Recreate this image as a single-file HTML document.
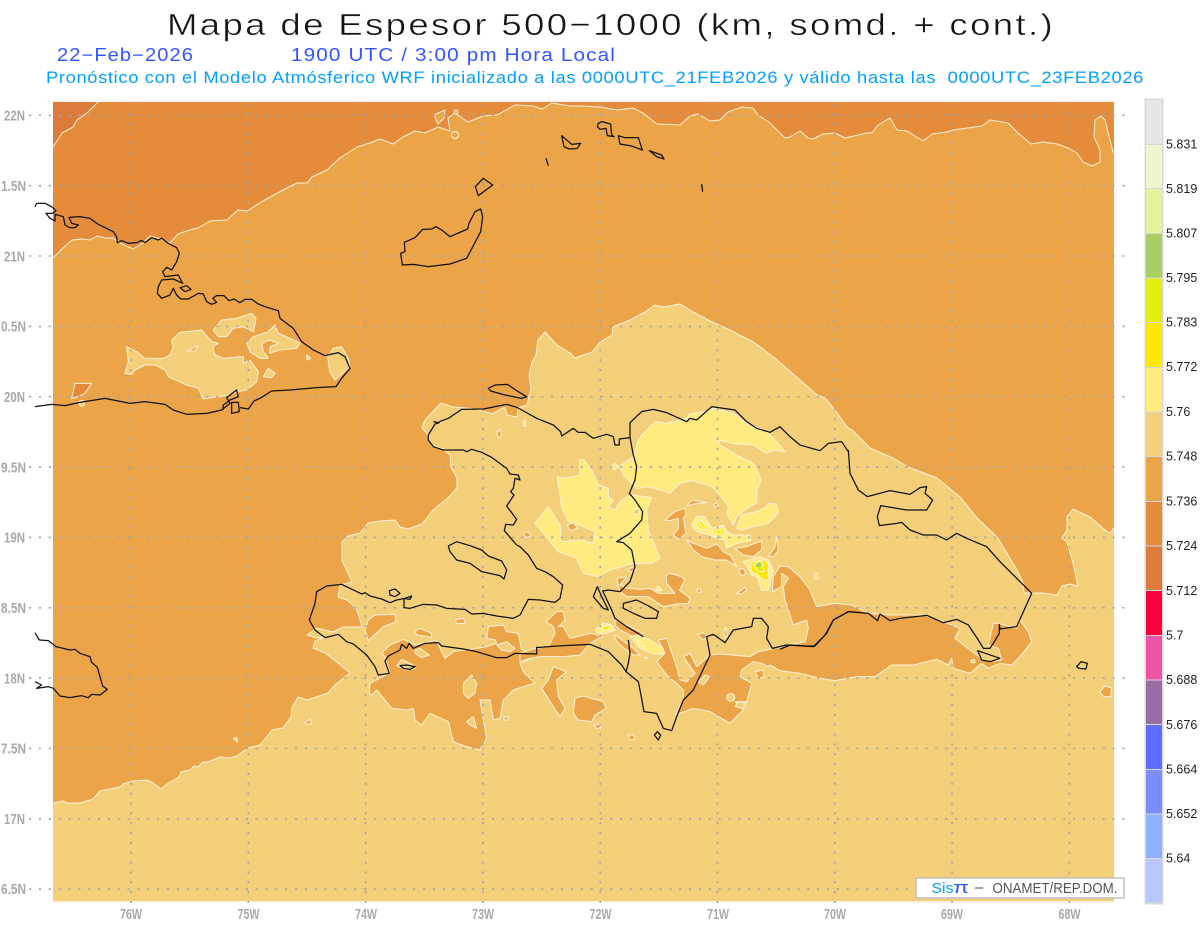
<!DOCTYPE html>
<html><head><meta charset="utf-8"><title>Mapa de Espesor</title>
<style>
html,body{margin:0;padding:0;background:#fff;width:1200px;height:927px;overflow:hidden}
svg{display:block}
polygon,polyline,circle{vector-effect:non-scaling-stroke}
.m polygon,.m circle{stroke:#fff2d8;stroke-width:1;stroke-linejoin:round}
.o{fill:#EBA447}.d{fill:#E58C3C}.x{fill:#DC7B3C}.t{fill:#F3CF7A}.y{fill:#FFEB80}.f{fill:#FCE800}.g{fill:#E2EE10}.a{fill:#A9CE64}
.c polygon,.c polyline{fill:none;stroke:#111;stroke-width:1.25;stroke-linejoin:round}
.lab{font:bold 14.5px "Liberation Sans",sans-serif;fill:#a9a9a9}
.cb{font:12.5px "Liberation Sans",sans-serif;fill:#222}
text{white-space:pre}
</style></head><body>
<svg width="1200" height="927" viewBox="0 0 1200 927" xmlns="http://www.w3.org/2000/svg">
<defs><clipPath id="p"><rect x="53" y="102" width="1061" height="799"/></clipPath></defs>
<rect width="1200" height="927" fill="#fff"/>
<text x="167" y="35" font-family="Liberation Sans" font-size="31" fill="#151515" stroke="#fff" stroke-width=".45" letter-spacing="2" textLength="888" lengthAdjust="spacingAndGlyphs">Mapa de Espesor 500−1000 (km, somd. + cont.)</text>
<text x="57" y="61" font-family="Liberation Sans" font-size="18" fill="#3355FF" letter-spacing="1" textLength="137" lengthAdjust="spacingAndGlyphs">22−Feb−2026</text>
<text x="291" y="61" font-family="Liberation Sans" font-size="18" fill="#3355FF" letter-spacing="1" textLength="325" lengthAdjust="spacingAndGlyphs">1900 UTC / 3:00 pm Hora Local</text>
<text x="46" y="83" font-family="Liberation Sans" font-size="16.5" fill="#00A0FF" letter-spacing=".6" textLength="1098" lengthAdjust="spacingAndGlyphs">Pronóstico con el Modelo Atmósferico WRF inicializado a las 0000UTC_21FEB2026 y válido hasta las  0000UTC_23FEB2026</text>

<rect x="46" y="100" width="1074" height="2" fill="#fdf6ee"/>
<rect x="53" y="901" width="1061" height="2" fill="#fdf3dc"/>
<g clip-path="url(#p)" class="m">
<rect x="53" y="102" width="1061" height="799" fill="#F3CF7A"/>
<!-- main orange -->
<polygon class="o" points="46,803 53,803 63,801 67,803 80,803 93,799 100,791 110,789 120,787 123,784 133,781 147,780 153,783 161,789 167,784 179,777 181,772 190,770 194,766 198,767 203,762 208,762 220,757 230,758 237,756 248,748 260,745 272,730 283,728 291,717 292,708 298,697 307,700 313,698 322,695 328,693 335,685 350,673 338,663 325,653 313,648 315,641 325,637 317,638 307,635 317,628 333,632 343,627 362,627 358,613 355,607 347,600 338,597 340,585 352,582 342,560 342,542 348,536 360,533 368,523 380,521 395,520 400,527 408,529 422,524 433,510 448,498 457,488 457,478 451,467 450,455 443,449 432,445 428,435 422,428 425,420 441,403 453,407 467,408 480,410 492,414 505,407 507,415 517,417 518,408 527,405 531,388 529,375 532,362 536,355 538,340 545,332 557,345 570,353 575,358 592,352 600,342 612,335 613,327 630,320 645,312 655,305 663,307 680,304 695,313 710,321 730,330 755,343 777,360 800,380 817,395 825,398 835,410 847,427 852,430 870,448 893,458 908,467 937,478 960,497 977,518 997,537 1017,570 1023,583 1024,593 1043,593 1057,595 1062,586 1070,584 1078,586 1073,563 1067,542 1062,538 1067,530 1067,517 1073,509 1090,517 1105,530 1110,533 1114,528 1120,528 1120,95 46,95"/>
<!-- dark orange -->
<polygon class="d" points="46,258 53,258 63,248 72,240 82,239 90,240 97,236 105,238 113,238 120,243 133,249 143,243 150,236 158,238 170,243 178,234 193,229 198,228 210,221 227,220 238,210 247,211 263,201 283,190 297,183 307,183 312,177 327,170 340,158 357,147 370,143 380,139 393,144 403,137 415,131 425,133 438,127 450,131 448,118 455,113 462,118 468,122 483,116 497,115 515,105 533,106 542,109 552,103 570,106 583,106 600,107 617,110 633,108 643,113 657,124 680,125 690,116 698,114 710,121 720,120 728,112 742,107 753,108 758,115 770,123 785,138 790,137 800,131 808,138 813,139 823,134 835,133 845,138 867,133 872,133 878,125 890,118 897,130 907,131 923,141 932,134 947,132 953,130 968,128 982,126 990,120 1008,123 1018,133 1031,144 1043,142 1057,144 1068,148 1077,153 1083,162 1092,166 1100,162 1100,150 1094,137 1095,120 1101,116 1105,120 1113,152 1120,153 1120,95 46,95"/>
<polygon class="x" points="46,150 53,147 62,133 73,127 77,120 88,112 98,102 100,95 46,95"/>
<polygon class="o" points="434,115 445,110 444,118 438,124"/>
<circle class="o" cx="455" cy="135" r="3.5"/>
<circle class="o" cx="456" cy="112" r="2"/>

<!-- Cuba tan -->
<g transform="translate(30,95) scale(.33333)">
<polygon class="t" points="290,755 320,770 345,790 400,790 420,780 430,755 425,735 450,712 515,705 545,740 565,745 548,755 555,780 580,790 640,785 640,805 660,795 685,830 680,860 650,885 620,890 600,900 520,912 505,880 470,870 415,845 405,825 375,810 345,810 315,825 305,838 285,835 295,800"/>
<polygon class="o" points="470,768 505,752 495,768"/>
<polygon class="t" points="550,705 575,675 620,670 665,655 678,670 670,710 640,695 610,700 590,725 565,725"/>
<polygon class="t" points="650,745 670,725 715,710 735,690 745,715 790,735 810,745 800,760 750,765 720,775 720,755 745,745 720,735 695,745 700,770 715,790 690,790 660,770"/>
<polygon class="t" points="700,845 715,820 735,835 725,848"/>
<polygon class="t" points="893,785 910,760 935,755 955,790 960,815 915,855 900,830 895,800"/>
<polygon class="t" points="830,780 842,790 830,795"/>
<polygon class="d" points="125,910 135,865 185,865 165,895 145,905"/>
<circle class="t" cx="155" cy="925" r="9"/>
</g>
<!-- tan small west -->
<g transform="translate(20,560) scale(.33333)">
<polygon class="t" points="640,535 650,532 653,547"/>
</g>

<!-- orange in west-central -->
<g transform="translate(300,400) scale(.33333)">
<polygon class="o" points="208,880 210,850 245,832 270,818 255,770 245,760 270,735 310,718 345,735 380,728 410,720 420,745 435,775 460,755 510,748 560,740 590,730 585,720 560,715 565,680 610,675 620,695 655,700 665,750 690,755 720,745 720,760 695,775 660,790 670,815 705,850 670,860 640,870 610,900 600,955 580,960 570,900 540,900 550,960 560,1015 540,1050 500,1040 460,1025 445,965 390,940 365,975 345,960 340,925 320,930 275,925 230,870 215,885"/>
<polygon class="t" points="490,880 490,850 515,825 530,850 525,880 505,895"/>
<polygon class="t" points="500,965 520,950 530,985 510,975"/>
<polygon class="t" points="590,735 620,725 645,745 630,755 605,750"/>
<polygon class="t" points="345,750 360,745 388,765 365,773 345,760"/>
<polygon class="t" points="290,797 305,778 340,795 345,805 320,810"/>
<polygon class="o" points="205,660 225,645 285,643 288,665 250,680 205,722 195,690"/>
<polygon class="o" points="345,695 360,685 395,700 395,712 350,705"/>
<polygon class="o" points="465,660 490,655 497,670 470,670"/>
<polygon class="o" points="590,95 600,90 605,105 595,115"/>
<polygon class="o" points="15,967 30,958 35,972 20,972"/>
<polygon class="o" points="612,952 625,950 625,960 612,960"/>
<polygon class="t" points="670,65 676,62 676,80 670,78"/>
</g>

<!-- center -->
<g transform="translate(520,400) scale(.33333)">
<polygon class="y" points="405,65 440,70 500,55 510,40 560,35 580,25 640,40 680,70 740,95 770,125 795,155 760,150 740,160 700,135 640,130 595,120 600,135 650,165 700,190 725,240 710,270 710,310 680,325 650,350 640,375 620,340 625,320 600,285 575,260 545,250 515,242 480,250 450,280 420,270 385,260 350,265 310,225 298,200 340,170 355,120 375,95"/>
<polygon class="y" points="112,230 135,235 180,225 178,180 190,178 215,210 235,255 265,265 265,290 280,300 265,320 285,330 300,305 330,285 395,292 380,330 385,390 420,475 395,490 340,490 270,510 235,530 190,520 170,475 115,455 45,370 85,320 120,375 125,425 185,420 220,430 225,395 190,380 145,365 125,320"/>
<polygon class="y" points="650,385 665,345 710,335 740,320 745,310 770,312 775,340 745,370 700,380 665,390"/>
<polygon class="y" points="515,375 530,348 555,350 575,385 610,375 620,395 640,405 690,405 692,422 650,430 620,445 612,420 590,415 570,405 530,395"/>
<polygon class="y" points="272,200 285,190 295,200 285,210"/>
<polygon class="t" points="340,330 355,325 360,340 345,345"/>
<polygon class="o" points="142,375 160,368 173,385 150,392"/>
<polygon class="o" points="10,400 25,395 35,410 15,412"/>
<polygon class="g" points="530,368 540,357 565,380 555,392 540,385"/>
<polygon class="f" points="537,368 543,362 558,380 552,387"/>
<polygon class="g" points="575,395 605,380 615,395 595,412"/>
<polygon class="f" points="585,397 603,387 606,395 595,404"/>
<polygon class="o" points="435,360 465,335 495,325 498,345 490,355 498,400 475,418 460,405 475,385 475,355 450,362"/>
<polygon class="o" points="500,318 515,300 535,303 560,308 530,310"/>
<polygon class="o" points="582,313 590,308 595,318 585,322"/>
<polygon class="o" points="500,420 520,430 560,445 590,432 610,455 630,465 650,500 620,480 585,480 545,470 520,450"/>
<polygon class="o" points="645,445 680,440 725,422 725,450 700,470 670,465"/>
<polygon class="o" points="745,470 765,440 770,410 775,450 760,470"/>
<polygon class="o" points="655,510 670,505 678,520 665,528"/>
<polygon class="o" points="650,580 675,562 680,570 665,582"/>
<polygon class="o" points="290,535 320,530 300,555 320,565 360,568 390,565 415,580 465,580 440,550 438,525 450,520 485,530 495,540 478,570 510,595 505,610 470,612 430,620 385,590 345,590 320,590 300,575"/>
<polygon class="o" points="322,510 335,502 350,510 335,516"/>
<polygon class="o" points="530,570 540,565 545,575 535,578"/>
<polygon class="y" points="405,568 415,558 427,570 415,574"/>
<polygon class="o" points="78,665 110,635 130,635 135,660 115,680 130,680 150,715 190,705 215,700 245,710 210,730 180,765 130,770 60,770 30,775 0,785 0,760 45,745 85,740 105,700 100,680"/>
<polygon class="o" points="65,865 85,840 100,800 140,815 110,840 115,890 135,925 120,950 100,920"/>
<polygon class="o" points="165,895 190,888 250,905 258,925 225,945 215,965 175,960 160,940"/>
<polygon class="o" points="285,705 340,745 360,765 340,765 300,735 285,715"/>
<polygon class="o" points="285,660 310,670 370,700 340,710 300,690 285,675"/>
<polygon class="o" points="532,705 550,698 565,710 550,720"/>
<polygon class="o" points="612,700 617,682 622,705 617,715"/>
<polygon class="o" points="222,975 240,973 243,983 228,985"/>
<polygon class="o" points="325,1005 340,1005 345,1018 330,1020"/>
<polygon class="o" points="372,772 382,772 380,778"/>
<!-- east big orange -->
<polygon class="o" points="757,575 760,530 780,498 805,500 840,530 870,570 890,620 945,610 995,615 1045,640 1110,645 1210,645 1270,665 1320,685 1305,715 1350,750 1390,780 1405,785 1445,780 1435,745 1405,735 1420,670 1435,670 1490,685 1500,660 1525,695 1535,725 1500,770 1475,795 1440,790 1405,805 1385,790 1350,820 1300,805 1295,775 1285,795 1250,778 1180,795 1115,795 1065,830 1010,830 945,842 900,835 840,820 780,812 750,795 745,800 725,790 700,785 665,810 660,830 695,850 680,905 645,905 670,930 630,970 570,935 520,925 465,945 490,900 490,870 470,850 440,825 410,785 435,760 415,720 440,715 470,800 480,840 500,845 525,820 490,770 510,760 530,800 570,765 600,762 690,770 715,755 790,740 855,725 865,685 860,660 820,675 795,600 790,560 805,535 785,520 785,560"/>
<polygon class="t" points="535,845 555,825 570,830 550,855"/>
<circle class="t" cx="632" cy="892" r="12"/>
<polygon class="t" points="645,920 655,905 680,910 670,925"/>
<polygon class="o" points="705,815 730,810 732,830 715,835"/>
<polygon class="y" points="670,485 720,470 745,480 760,510 745,570 725,572 712,530 695,525 682,500"/>
<polygon class="f" points="690,490 730,478 745,490 745,540 730,540 715,525 695,515"/>
<polygon class="g" points="700,495 725,482 733,515 715,515"/>
<polygon class="a" style="stroke:none" points="708,492 720,486 724,500 712,502"/>
<polygon class="y" points="225,690 250,668 275,675 285,690 260,700 235,700"/>
<polygon class="f" points="245,680 265,678 270,688 250,690"/>
<polygon class="y" points="330,710 350,705 390,720 430,745 430,762 400,762 360,745"/>
<polygon class="f" points="345,712 375,740 360,735"/>
<polygon class="t" points="885,522 892,520 894,535 887,537"/>
<polygon class="t" points="10,62 16,60 16,78 10,78"/>
</g>
<g transform="translate(780,430) scale(.33333)">
<polygon class="o" points="960,785 975,768 995,775 992,800 972,800"/>
<polygon class="t" points="102,432 112,430 114,445 105,447"/>
<polygon class="t" points="572,692 582,688 586,697 575,699"/>
</g>
</g>

<!-- grid -->
<g stroke="#a4a6a6" stroke-width="1.6" stroke-dasharray="2.2 7.65" fill="none">
<path d="M29 115.3H1132M29 185.7H1132M29 256H1132M29 326.4H1132M29 396.7H1132M29 467.1H1132M29 537.4H1132M29 607.8H1132M29 678.1H1132M29 748.5H1132M29 818.8H1132M29 889.2H1132"/>
<path d="M131 103V905M248.3 103V905M365.6 103V905M482.9 103V905M600.2 103V905M717.5 103V905M834.8 103V905M952.1 103V905M1069.4 103V905"/>
</g>

<!-- coastlines -->
<g class="c">
<g transform="translate(30,95) scale(.33333)">
<polyline points="15,335 20,325 45,325 65,335 78,347 68,355 48,355 60,370 75,378 75,358 100,365 105,390 120,398 135,398 145,390 125,385 117,367 150,365 180,370 205,388 250,410 260,425 262,443 275,437 295,445 320,443 335,436 345,443 365,428 385,435 395,430 415,445 440,458 448,475 440,500 425,525 410,517 398,530 405,545 445,540 458,565 430,552 395,555 385,575 382,595 395,610 420,600 430,580 440,600 452,612 475,612 505,595 520,597 530,620 545,628 560,622 548,610 560,602 582,602 597,617 612,612 630,623 645,613 665,613 685,627 705,635 745,647 750,670 790,700 815,740 850,765 885,782 925,773 945,785 960,820 935,850 918,875 860,878 780,885 725,888 690,910 672,918 655,942 630,938"/>
<polyline points="15,935 65,928 105,932 150,922 225,910 300,925 345,920 405,928 430,945 470,958 530,955 575,945 600,925 590,908 620,885 625,905 600,915 580,930 578,945"/>
<polygon points="605,922 625,922 628,950 605,955"/>
<polygon points="450,578 470,572 483,583 465,590"/>
</g>
<g transform="translate(370,95) scale(.33333)">
<polygon points="92,475 105,470 103,442 135,428 158,403 185,402 198,395 215,405 240,425 293,402 297,385 315,350 332,342 338,365 332,410 290,490 240,507 175,515 130,508 97,510"/>
<polygon points="340,250 368,270 325,302 316,275"/>
<polyline points="528,190 535,212"/>
<polygon points="575,122 605,148 632,145 622,160 598,162 582,155"/>
<polygon points="685,85 695,80 722,87 725,120 732,125 712,122 708,100 690,103 682,95"/>
<polygon points="745,122 765,128 805,128 817,165 785,153 750,147"/>
<polygon points="838,167 875,180 882,192 860,185"/>
<polyline points="995,267 998,290"/>
<polygon points="355,880 375,870 412,868 440,887 470,905 455,910 405,900 362,888"/>
</g>
<g transform="translate(300,400) scale(.33333)">
<polyline points="400,65 418,68 405,72 385,105 385,120 400,140 430,150 490,150 500,155 515,148 545,157 575,172 620,205 630,222 655,225 660,240 645,235 640,265 632,275 642,285 620,318 650,358 640,375 617,373 613,392 650,435"/>
<polyline points="418,65 445,55 485,28 550,27 620,13 650,22"/>
<polyline points="720,600 685,598 660,645 640,655 590,648 550,640 515,642 495,628 440,625 410,615 370,613 330,625 312,623 312,595 330,598 335,588 315,595 290,600 270,608 245,597 210,588 195,578 185,582 125,553 80,558 50,575 45,610 28,660 45,690 75,713 115,703 140,725 160,732 200,765 225,800 235,825 268,820 255,783 265,768 300,750 305,733 320,745 327,730 340,745 375,730 415,728 425,738 490,747 530,755 590,773 620,773 645,760 710,762 710,742 720,742"/>
<polygon points="268,572 285,567 300,580 285,590 270,585"/>
<polygon points="300,797 320,795 345,800 330,808 310,805"/>
<polygon points="445,438 470,425 510,437 545,450 565,468 605,483 620,510 612,537 600,527 545,515 510,490 470,480 450,455"/>
</g>
<g transform="translate(520,400) scale(.33333)">
<polyline points="-10,22 0,27 50,55 100,75 122,95 125,108 160,85 175,97 195,97 220,115 260,103 280,110 285,135 298,135 298,117 330,113 330,68 365,35 400,28 440,38 500,65 510,55 530,60 575,20 645,30 680,65 710,85 750,97 780,80 810,110 840,135 900,152 925,130 965,125 985,155"/>
<polyline points="330,113 340,165 350,200 345,240 328,280 345,300 368,335 365,360 330,400 290,425 310,428 335,450 345,500 330,545 300,575 265,570 248,573 275,630 285,655 320,680 370,710"/>
<polygon points="232,560 220,590 250,625 265,630 245,590"/>
<polyline points="60,742 110,738 210,733 265,755 305,795 318,815 355,845 362,880 372,935 410,940 430,985 455,992 470,950 490,900 520,870 570,765 560,710 580,703 615,728 640,690 695,680 700,655 725,655 745,680 740,715 757,745 800,735 880,740 915,705 940,660 985,635 1020,638"/>
<polyline points="325,720 330,760 325,790 318,815"/>
<polygon points="310,610 350,600 390,620 415,635 410,655 375,655 340,640 310,625"/>
<polygon points="403,1005 412,995 422,1005 415,1020"/>
<polyline points="-10,435 0,440 25,465 50,505 75,515 100,530 128,555 120,595 105,607 60,600"/>
</g>
<g transform="translate(780,430) scale(.33333)">
<polyline points="205,60 210,130 235,180 262,200 330,182 390,193 420,173 440,170 435,190 458,210 440,240 380,240 302,227 292,260 298,287 350,280 365,277 390,300 430,315 470,315 500,330 530,310 560,325 620,350 660,395 755,490 710,590 660,597 658,583 658,610 640,640 630,655 610,655 595,630 565,585 530,568 490,578 440,556 360,565 330,572 300,552 293,572 265,550 205,545 160,570 140,610 105,648 80,648 30,645 0,658"/>
<polygon points="593,662 660,685 630,695 605,690"/>
<polygon points="890,710 903,695 922,700 918,717 897,715"/>
</g>
<g transform="translate(20,560) scale(.33333)">
<polyline points="45,218 58,240 85,242 108,260 150,270 165,268 180,280 210,290 215,307 232,322 248,378 262,388 240,405 215,403 205,413 185,407 150,413 120,408 100,385 85,380 50,385 65,375 45,365"/>
</g>
</g>

<!-- axis labels -->
<g class="lab">
<text x="4" y="120.5" textLength="21" lengthAdjust="spacingAndGlyphs">22N</text>
<text x="1" y="191" textLength="25" lengthAdjust="spacingAndGlyphs">1.5N</text>
<text x="4" y="261.5" textLength="21" lengthAdjust="spacingAndGlyphs">21N</text>
<text x="1" y="331.5" textLength="25" lengthAdjust="spacingAndGlyphs">0.5N</text>
<text x="4" y="402" textLength="21" lengthAdjust="spacingAndGlyphs">20N</text>
<text x="1" y="472.5" textLength="25" lengthAdjust="spacingAndGlyphs">9.5N</text>
<text x="4" y="542.5" textLength="21" lengthAdjust="spacingAndGlyphs">19N</text>
<text x="1" y="613" textLength="25" lengthAdjust="spacingAndGlyphs">8.5N</text>
<text x="4" y="683.5" textLength="21" lengthAdjust="spacingAndGlyphs">18N</text>
<text x="1" y="753.5" textLength="25" lengthAdjust="spacingAndGlyphs">7.5N</text>
<text x="4" y="824" textLength="21" lengthAdjust="spacingAndGlyphs">17N</text>
<text x="1" y="894" textLength="25" lengthAdjust="spacingAndGlyphs">6.5N</text>
<text x="120" y="919" textLength="22" lengthAdjust="spacingAndGlyphs">76W</text>
<text x="237.5" y="919" textLength="22" lengthAdjust="spacingAndGlyphs">75W</text>
<text x="355" y="919" textLength="22" lengthAdjust="spacingAndGlyphs">74W</text>
<text x="472" y="919" textLength="22" lengthAdjust="spacingAndGlyphs">73W</text>
<text x="589.5" y="919" textLength="22" lengthAdjust="spacingAndGlyphs">72W</text>
<text x="707" y="919" textLength="22" lengthAdjust="spacingAndGlyphs">71W</text>
<text x="824" y="919" textLength="22" lengthAdjust="spacingAndGlyphs">70W</text>
<text x="941" y="919" textLength="22" lengthAdjust="spacingAndGlyphs">69W</text>
<text x="1058.5" y="919" textLength="22" lengthAdjust="spacingAndGlyphs">68W</text>
</g>

<!-- colorbar -->
<rect x="1144.5" y="98.5" width="19" height="806" fill="#d8d8d8"/>
<g>
<rect x="1146" y="100" width="16" height="44" fill="#E6E6E6"/>
<rect x="1146" y="145" width="16" height="43" fill="#EEF5CF"/>
<rect x="1146" y="189" width="16" height="44" fill="#E4F29C"/>
<rect x="1146" y="234" width="16" height="43.5" fill="#A9CE64"/>
<rect x="1146" y="278.5" width="16" height="43.5" fill="#E2EE10"/>
<rect x="1146" y="323" width="16" height="44" fill="#FCE800"/>
<rect x="1146" y="368" width="16" height="43.5" fill="#FFEB80"/>
<rect x="1146" y="412.5" width="16" height="43.5" fill="#F3CF7A"/>
<rect x="1146" y="457" width="16" height="44" fill="#EBA447"/>
<rect x="1146" y="502" width="16" height="43.5" fill="#E58C3C"/>
<rect x="1146" y="546.5" width="16" height="43.5" fill="#DC7B3C"/>
<rect x="1146" y="591" width="16" height="44" fill="#F5003C"/>
<rect x="1146" y="636" width="16" height="43.5" fill="#EC55A5"/>
<rect x="1146" y="680.5" width="16" height="43.5" fill="#9C6CA6"/>
<rect x="1146" y="725" width="16" height="44" fill="#606EFF"/>
<rect x="1146" y="770" width="16" height="43.5" fill="#7B8DFF"/>
<rect x="1146" y="814.5" width="16" height="43.5" fill="#8FB0FF"/>
<rect x="1146" y="859" width="16" height="43.5" fill="#B8C8FF"/>
</g>
<g class="cb">
<text x="1166" y="148.5">5.831</text>
<text x="1166" y="193">5.819</text>
<text x="1166" y="237.5">5.807</text>
<text x="1166" y="282">5.795</text>
<text x="1166" y="326.5">5.783</text>
<text x="1166" y="371">5.772</text>
<text x="1166" y="416">5.76</text>
<text x="1166" y="460.5">5.748</text>
<text x="1166" y="505.5">5.736</text>
<text x="1166" y="550">5.724</text>
<text x="1166" y="595">5.712</text>
<text x="1166" y="639.5">5.7</text>
<text x="1166" y="684">5.688</text>
<text x="1166" y="729">5.676</text>
<text x="1166" y="773.5">5.664</text>
<text x="1166" y="818">5.652</text>
<text x="1166" y="862.5">5.64</text>
</g>

<!-- credit -->
<rect x="916" y="878" width="208" height="20" fill="#fff" stroke="#bdbdbd" stroke-width="1.4"/>
<text x="931.5" y="893" font-family="Liberation Sans" font-size="15" fill="#00A0FF" textLength="22" lengthAdjust="spacingAndGlyphs">Sis</text>
<text x="953" y="893" font-family="Liberation Sans" font-size="17" fill="#3355FF" textLength="16" lengthAdjust="spacingAndGlyphs">π</text>
<text x="974" y="893" font-family="Liberation Sans" font-size="15" fill="#555" textLength="10" lengthAdjust="spacingAndGlyphs">−</text>
<text x="992.5" y="893" font-family="Liberation Sans" font-size="15" fill="#555" textLength="125" lengthAdjust="spacingAndGlyphs">ONAMET/REP.DOM.</text>
</svg>
</body></html>
